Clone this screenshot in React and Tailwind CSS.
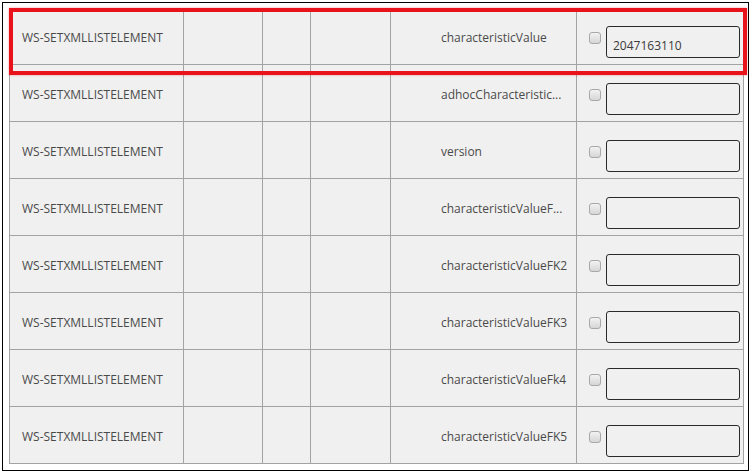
import React from "react";

const rows = [
  { name: "characteristicValue", value: "2047163110" },
  { name: "adhocCharacteristic...", value: "" },
  { name: "version", value: "" },
  { name: "characteristicValueF...", value: "" },
  { name: "characteristicValueFK2", value: "" },
  { name: "characteristicValueFK3", value: "" },
  { name: "characteristicValueFk4", value: "" },
  { name: "characteristicValueFK5", value: "" },
];

const font = { fontFamily: '"Open Sans", "Liberation Sans", sans-serif' };

function Row({ name, value }) {
  return (
    <div className="flex h-[57px] border-b border-[#a3a3a3] bg-[#f0f0f0] text-[12px] text-[#4a4a4a]">
      <div className="flex w-[174px] shrink-0 items-center border-r border-[#a3a3a3] pl-[12px] pt-[3px]">
        WS-SETXMLLISTELEMENT
      </div>
      <div className="w-[79px] shrink-0 border-r border-[#a3a3a3]" />
      <div className="w-[48px] shrink-0 border-r border-[#a3a3a3]" />
      <div className="w-[80px] shrink-0 border-r border-[#a3a3a3]" />
      <div className="flex w-[186px] shrink-0 items-center border-r border-[#a3a3a3] pl-[50px] pt-[3px]">
        <span className="whitespace-nowrap">{name}</span>
      </div>
      <div className="flex w-[167px] shrink-0 items-start border-r border-[#a3a3a3]">
        <span className="ml-[12px] mt-[24px] h-[12px] w-[12px] shrink-0 rounded-[3px] border border-[#a8a8a8] bg-gradient-to-b from-[#f2f2f2] to-[#d6d6d6]" />
        <input
          readOnly
          value={value}
          className="ml-[5px] mt-[18px] h-[32px] w-[134px] shrink-0 rounded-[3px] border border-[#2a2a2a] bg-[#f0f0f0] pl-[6px] pt-[6px] text-[12px] text-[#3a3a3a] outline-none"
          style={font}
        />
      </div>
    </div>
  );
}

export default function App() {
  return (
    <div className="h-[472px] w-[754px] bg-white pl-[2px] pt-[2px]" style={font}>
      <div className="relative h-[469px] w-[747px] border border-black pl-[6px] pt-[5px]">
        <div className="w-[735px] border-l border-[#a3a3a3]">
          {rows.map((r, i) => (
            <Row key={i} name={r.name} value={r.value} />
          ))}
        </div>
        {/* highlight frame around the first row */}
        <div className="pointer-events-none absolute left-[6px] top-[5px] h-[67px] w-[738px] border-4 border-[#e8131b] shadow-[0_0_2px_rgba(232,19,27,0.45)]" />
      </div>
    </div>
  );
}
